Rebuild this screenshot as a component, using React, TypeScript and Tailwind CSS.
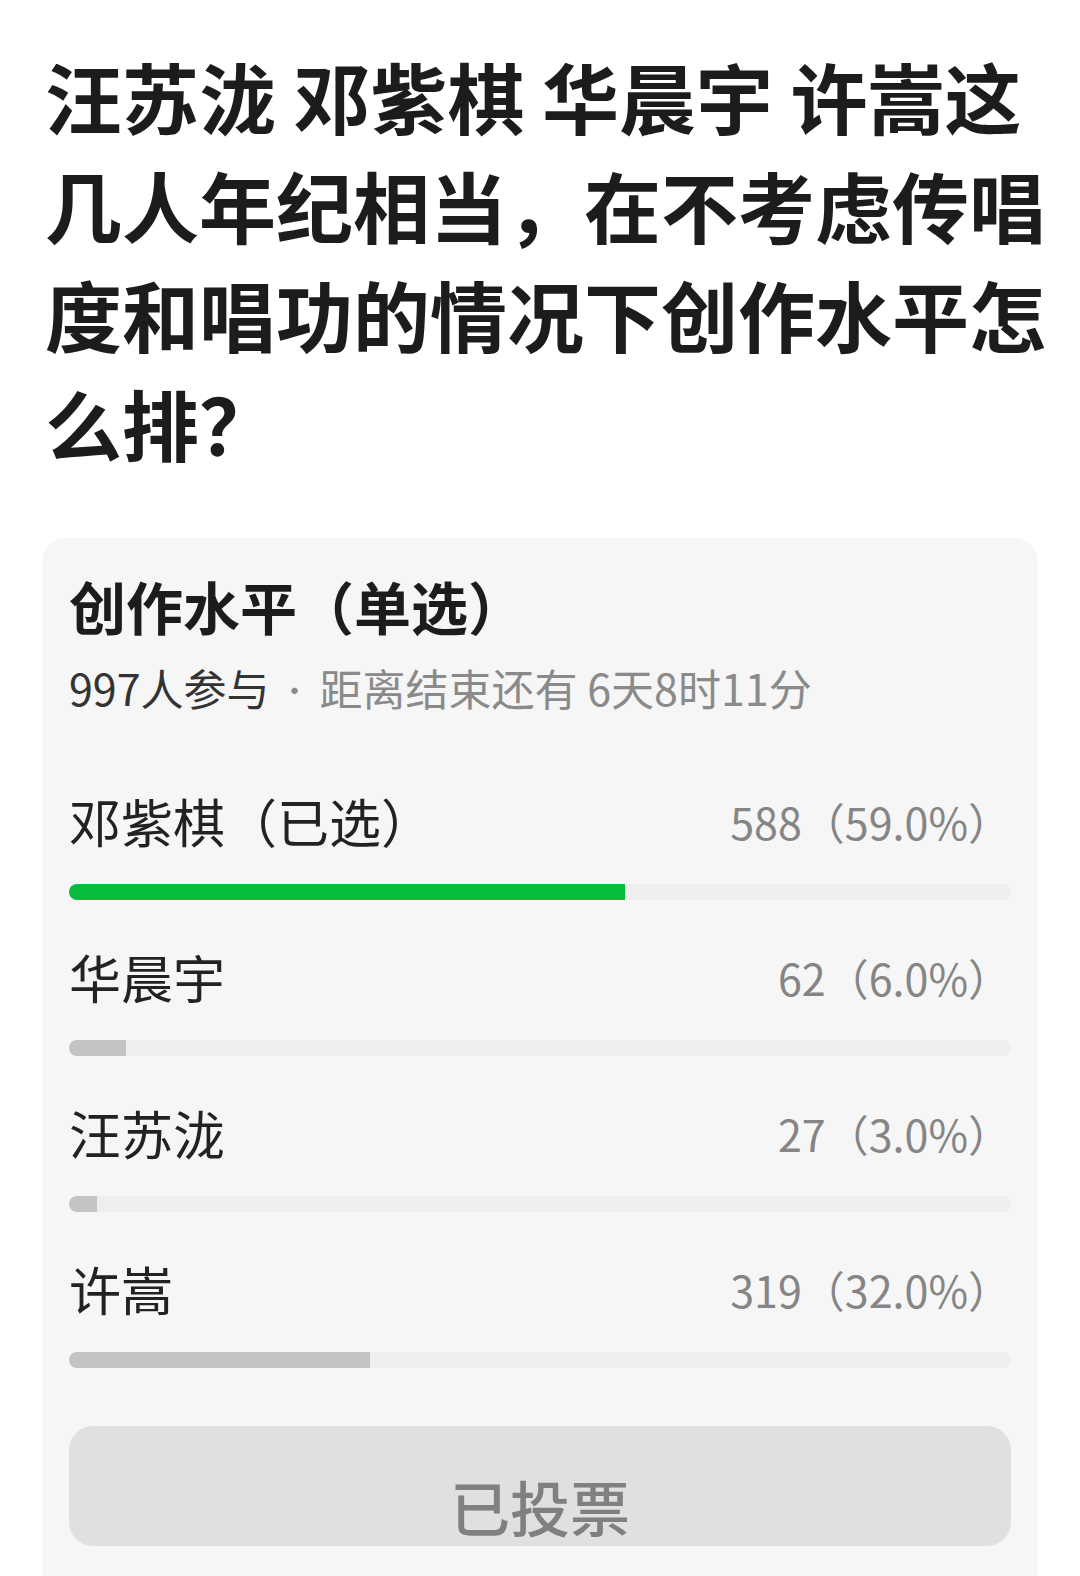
interface PollOption {
  name: string
  picked?: boolean
  count: number
  pct: number
}

const options: PollOption[] = [
  { name: '邓紫棋', picked: true, count: 588, pct: 59 },
  { name: '华晨宇', count: 62, pct: 6 },
  { name: '汪苏泷', count: 27, pct: 3 },
  { name: '许嵩', count: 319, pct: 32 },
]

function OptionRow({ name, picked, count, pct }: PollOption) {
  return (
    <div>
      <div className="flex h-[64px] items-center justify-between">
        <p className="text-[52px] leading-[64px] text-[#222222]">
          {name}
          {picked && '（已选）'}
        </p>
        <p className="text-[43px] leading-[64px] text-[#858585]">
          {count}（{pct.toFixed(1)}%）
        </p>
      </div>
      <div className="mt-[31px] h-[16px] overflow-hidden rounded-full bg-[#eeeeee]">
        <div
          className={picked ? 'h-full bg-[#07bb3b]' : 'h-full bg-[#c4c4c4]'}
          style={{ width: `${pct}%` }}
        />
      </div>
    </div>
  )
}

export default function App() {
  return (
    <div className="h-[1576px] w-[1080px] overflow-hidden bg-white font-['Noto_Sans_CJK_SC',sans-serif]">
      <h1 className="pl-[45px] pr-[25px] pt-[41px] text-[77px] font-semibold leading-[109px] text-[#1c1c1c]">
        汪苏泷 邓紫棋 华晨宇 许嵩这几人年纪相当，在不考虑传唱度和唱功的情况下创作水平怎么排？
      </h1>

      <section className="mx-[42px] mt-[61px] rounded-[24px] bg-[#f6f6f6] px-[27px] pb-[60px] pt-[31px]">
        <h2 className="text-[57px] font-semibold leading-[72px] text-[#1c1c1c]">创作水平（单选）</h2>
        <p className="mt-[18px] text-[43px] leading-[56px] text-[#8a8a8a]">
          <span className="text-[#333333]">997人参与</span>
          <span className="mx-[10px] text-[30px] align-[4px]">·</span>
          距离结束还有 6天8时11分
        </p>

        <div className="mt-[72px] space-y-[45px]">
          {options.map(opt => (
            <OptionRow key={opt.name} {...opt} />
          ))}
        </div>

        <button
          type="button"
          className="mt-[58px] flex h-[120px] w-full items-center justify-center rounded-[24px] bg-[#e0e0e0] pt-[40px] text-[60px] font-medium leading-[60px] text-[#808080]"
        >
          已投票
        </button>
      </section>
    </div>
  )
}
